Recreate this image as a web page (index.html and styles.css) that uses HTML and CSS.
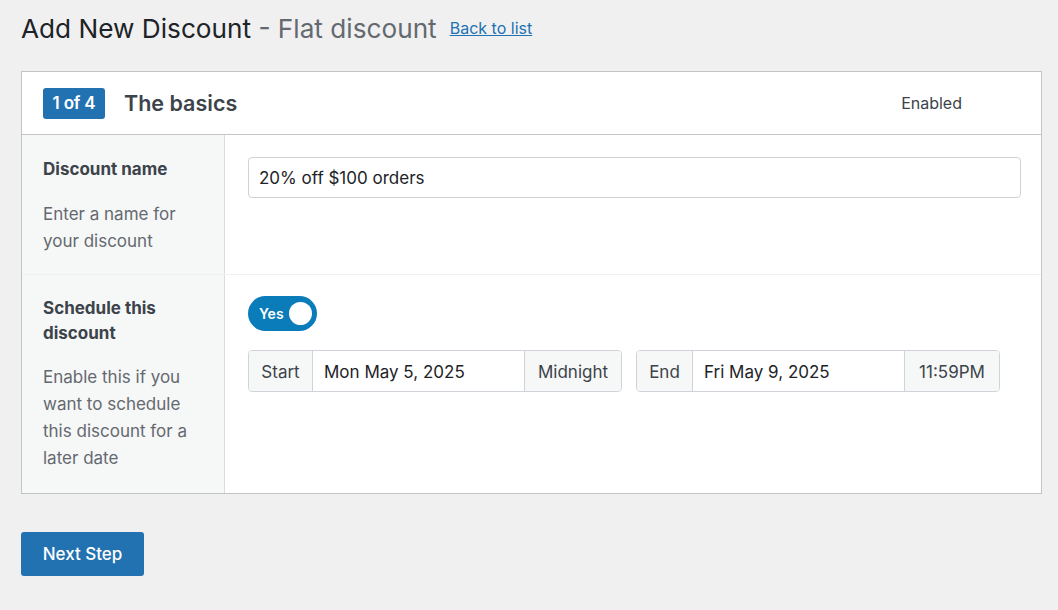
FILE: index.html
```html
<!DOCTYPE html>
<html lang="en">
<head>
<meta charset="utf-8">
<title>Add New Discount</title>
<link rel="stylesheet" href="styles.css">
</head>
<body>
<div class="page">
  <div class="title-row">
    <h1 class="page-title">Add New Discount <span class="sub">- Flat discount</span></h1>
    <a class="back-link" href="#">Back to list</a>
  </div>

  <div class="card">
    <div class="card-header">
      <span class="step-badge">1 of 4</span>
      <h2 class="card-title">The basics</h2>
      <span class="status">Enabled</span>
    </div>

    <div class="form-row">
      <div class="label-cell">
        <div class="field-label">Discount name</div>
        <p class="field-desc">Enter a name for your discount</p>
      </div>
      <div class="control-cell">
        <div class="text-input">20% off $100 orders</div>
      </div>
    </div>

    <div class="form-row last">
      <div class="label-cell">
        <div class="field-label">Schedule this discount</div>
        <p class="field-desc">Enable this if you want to schedule this discount for a later date</p>
      </div>
      <div class="control-cell">
        <div class="toggle">
          <span class="toggle-text">Yes</span>
          <span class="toggle-knob"></span>
        </div>
        <div class="date-groups">
          <div class="date-group">
            <span class="addon addon-start">Start</span>
            <span class="date-value">Mon May 5, 2025</span>
            <span class="addon addon-time-start">Midnight</span>
          </div>
          <div class="date-group">
            <span class="addon addon-end">End</span>
            <span class="date-value">Fri May 9, 2025</span>
            <span class="addon addon-time-end">11:59PM</span>
          </div>
        </div>
      </div>
    </div>
  </div>

  <button class="next-btn" type="button">Next Step</button>
</div>
</body>
</html>
```

FILE: styles.css
```css
* { box-sizing: border-box; }

html, body {
  margin: 0;
  padding: 0;
  background: #f0f0f1;
  font-family: Inter, "Noto Sans", "Liberation Sans", sans-serif;
  color: #1d2327;
}

.page {
  padding: 11px 16px 0 21px;
}

.title-row {
  display: flex;
  align-items: center;
  height: 35px;
}

.page-title {
  margin: 0;
  font-size: 26.2px;
  font-weight: 400;
  line-height: 35px;
  color: #1d2327;
}

.page-title .sub {
  color: #646970;
}

.back-link {
  margin-left: 13px;
  font-size: 16px;
  color: #2271b1;
  text-decoration: underline;
  line-height: 20px;
  margin-top: -2px;
}

.card {
  margin-top: 25px;
  background: #fff;
  border: 1px solid #c3c4c7;
}

.card-header {
  display: flex;
  align-items: center;
  height: 63px;
  padding: 0 79px 0 21px;
  border-bottom: 1px solid #c3c4c7;
}

.step-badge {
  display: inline-flex;
  align-items: center;
  justify-content: center;
  width: 62px;
  height: 31px;
  background: #2271b1;
  color: #fff;
  border-radius: 3px;
  font-size: 17px;
  font-weight: 600;
  letter-spacing: -0.2px;
}

.card-title {
  margin: 0 0 0 19px;
  font-size: 21.5px;
  font-weight: 600;
  color: #3c434a;
}

.status {
  margin-left: auto;
  font-size: 16px;
  color: #3c434a;
}

.form-row {
  display: grid;
  grid-template-columns: 203px 1fr;
  border-bottom: 1px solid #f0f0f1;
}

.form-row.last {
  border-bottom: none;
}

.label-cell {
  background: #f6f7f7;
  border-right: 1px solid #dcdcde;
  padding: 22px 20px 19px 21px;
}

.form-row.last .label-cell {
  padding-top: 21px;
  padding-bottom: 21px;
}

.field-label {
  font-size: 17px;
  font-weight: 700;
  line-height: 25px;
  color: #3c434a;
}

.field-desc {
  margin: 19px 0 0;
  font-size: 17px;
  line-height: 27px;
  color: #646970;
}

.form-row.last .field-desc {
  margin-top: 18px;
}

.control-cell {
  padding: 22px 20px 20px 23px;
}

.form-row.last .control-cell {
  padding-top: 21px;
}

.text-input {
  height: 41px;
  border: 1px solid #d0d2d8;
  border-radius: 4px;
  padding: 1px 10px 0;
  display: flex;
  align-items: center;
  font-size: 17px;
  color: #1d2327;
}

.toggle {
  position: relative;
  width: 69px;
  height: 35px;
  border-radius: 18px;
  background: #0a7cb9;
  display: flex;
  align-items: center;
  padding-left: 11px;
}

.toggle-text {
  color: #fff;
  font-size: 14px;
  font-weight: 600;
}

.toggle-knob {
  position: absolute;
  right: 5px;
  top: 6px;
  width: 23px;
  height: 23px;
  border-radius: 50%;
  background: #fff;
}

.date-groups {
  display: flex;
  gap: 14px;
  margin-top: 19px;
}

.date-group {
  display: flex;
  height: 42px;
  border: 1px solid #d0d3da;
  border-radius: 4px;
  overflow: hidden;
}

.addon,
.date-value {
  display: flex;
  align-items: center;
  padding-top: 1px;
  font-size: 17px;
  color: #3c434a;
}

.addon {
  background: #f6f7f7;
  justify-content: center;
}

.date-value {
  width: 213px;
  padding-left: 11px;
  background: #fff;
  color: #1d2327;
  border-left: 1px solid #d0d3da;
  border-right: 1px solid #d0d3da;
}

.addon-start { width: 63px; }
.addon-time-start { width: 96px; }
.addon-end { width: 55px; }
.addon-time-end { width: 94px; }

.next-btn {
  margin-top: 38px;
  width: 123px;
  height: 44px;
  border: none;
  border-radius: 3px;
  background: #2271b1;
  color: #fff;
  font-family: inherit;
  font-size: 17px;
  font-weight: 500;
  cursor: pointer;
}
```
